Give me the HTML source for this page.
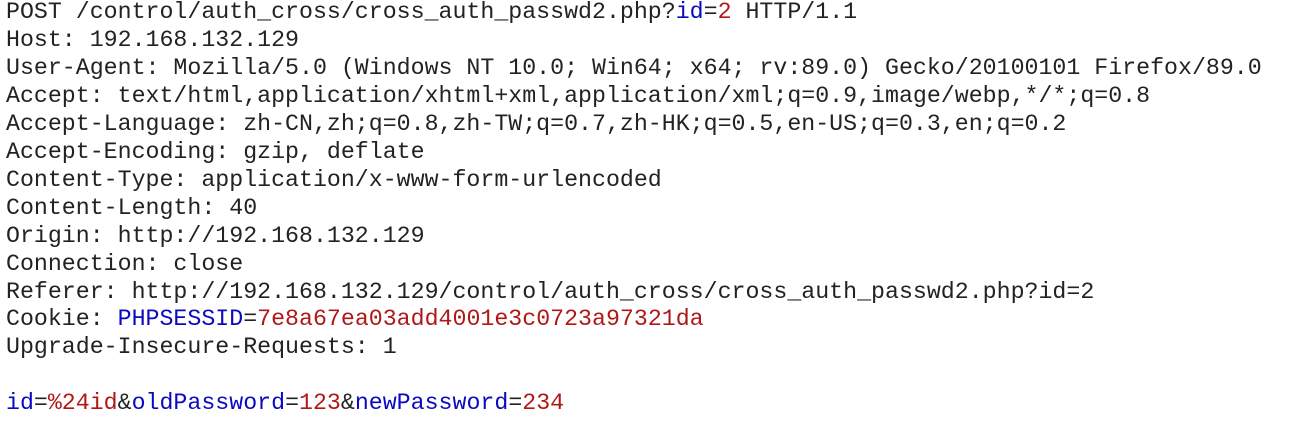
<!DOCTYPE html>
<html><head><meta charset="utf-8"><style>
html,body{margin:0;padding:0;background:#fff;width:1309px;height:429px;overflow:hidden}
pre{margin:0;position:absolute;left:6px;top:-1px;font-family:"Liberation Mono","Courier New",monospace;font-size:23.25px;line-height:27.95px;color:#222;letter-spacing:0}
.b{color:#0a0ac0}.r{color:#b01818}
</style></head><body><pre>POST /control/auth_cross/cross_auth_passwd2.php?<span class="b">id</span>=<span class="r">2</span> HTTP/1.1
Host: 192.168.132.129
User-Agent: Mozilla/5.0 (Windows NT 10.0; Win64; x64; rv:89.0) Gecko/20100101 Firefox/89.0
Accept: text/html,application/xhtml+xml,application/xml;q=0.9,image/webp,*/*;q=0.8
Accept-Language: zh-CN,zh;q=0.8,zh-TW;q=0.7,zh-HK;q=0.5,en-US;q=0.3,en;q=0.2
Accept-Encoding: gzip, deflate
Content-Type: application/x-www-form-urlencoded
Content-Length: 40
Origin: http://192.168.132.129
Connection: close
Referer: http://192.168.132.129/control/auth_cross/cross_auth_passwd2.php?id=2
Cookie: <span class="b">PHPSESSID</span>=<span class="r">7e8a67ea03add4001e3c0723a97321da</span>
Upgrade-Insecure-Requests: 1

<span class="b">id</span>=<span class="r">%24id</span>&amp;<span class="b">oldPassword</span>=<span class="r">123</span>&amp;<span class="b">newPassword</span>=<span class="r">234</span></pre></body></html>
